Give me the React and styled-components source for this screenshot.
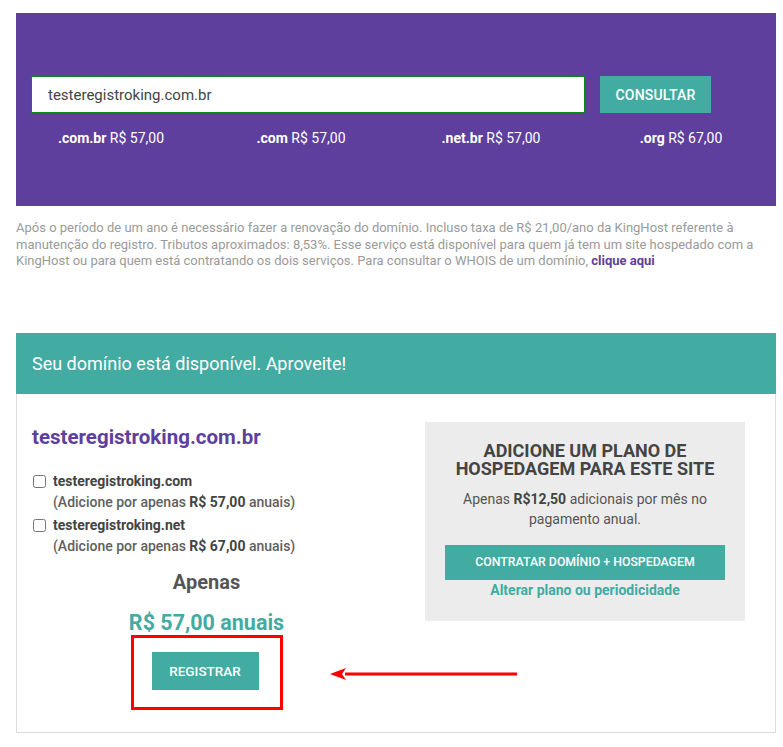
import React from "react";
import styled, { createGlobalStyle } from "styled-components";

const GlobalStyle = createGlobalStyle`
  body {
    margin: 0;
    background: #fff;
    font-family: Roboto, "Liberation Sans", Arial, sans-serif;
  }
`;

const PURPLE = "#5e3f9d";
const TEAL = "#42aba2";

const Page = styled.div`
  width: 760px;
  margin: 13px 0 0 16px;
`;

const SearchBanner = styled.div`
  background-color: ${PURPLE};
  height: 193px;
  padding-top: 63px;
  box-sizing: border-box;
`;

const SearchRow = styled.div`
  display: flex;
  gap: 15px;
  padding-left: 15px;
`;

const DomainInput = styled.input`
  width: 554px;
  height: 37px;
  box-sizing: border-box;
  border: 1px solid #0b8a1c;
  outline: none;
  padding: 0 16px;
  font-family: Roboto, "Liberation Sans", Arial, sans-serif;
  font-size: 15px;
  color: #444;
  background: #fff;
`;

const ConsultButton = styled.button`
  width: 111px;
  height: 37px;
  border: none;
  background-color: ${TEAL};
  color: #fff;
  font-family: Roboto, "Liberation Sans", Arial, sans-serif;
  font-size: 14px;
  font-weight: 500;
  letter-spacing: 0.2px;
  text-transform: uppercase;
`;

const PriceRow = styled.div`
  display: grid;
  grid-template-columns: repeat(4, 1fr);
  margin-top: 15px;
`;

const PriceItem = styled.div`
  text-align: center;
  color: #fff;
  font-size: 14px;
  line-height: 20px;

  b {
    font-weight: 700;
  }
`;

const Notice = styled.p`
  margin: 14px 0 0;
  font-size: 13px;
  line-height: 16.5px;
  color: #9a9a9a;

  a {
    color: ${PURPLE};
    font-weight: 700;
    text-decoration: none;
  }
`;

const ResultCard = styled.div`
  margin-top: 63px;
  position: relative;
`;

const ResultHeader = styled.div`
  background-color: ${TEAL};
  height: 61px;
  display: flex;
  align-items: center;
  padding-left: 16px;
  color: #fff;
  font-size: 18px;
`;

const ResultBody = styled.div`
  display: grid;
  grid-template-columns: 1fr 1fr;
  border: 1px solid #dcdcdc;
  border-top: none;
  height: 339px;
  box-sizing: border-box;
`;

const LeftCol = styled.div`
  padding: 31px 0 0 15px;
  display: flex;
  flex-direction: column;
`;

const DomainTitle = styled.h2`
  margin: 0;
  font-size: 20.5px;
  line-height: 24px;
  font-weight: 700;
  color: ${PURPLE};
`;

const ExtraList = styled.div`
  margin-top: 22px;
  display: flex;
  flex-direction: column;
  gap: 2px;
`;

const ExtraItem = styled.label`
  display: flex;
  align-items: flex-start;
  gap: 7px;
  font-size: 14px;
  line-height: 21px;
  font-weight: 500;
  color: #606060;

  input {
    margin: 4px 0 0 1px;
    width: 13px;
    height: 13px;
  }

  b {
    font-weight: 700;
    color: #444;
  }
`;

const PriceBlock = styled.div`
  display: flex;
  flex-direction: column;
  align-items: center;
  margin-left: -15px;
`;

const ApenasLabel = styled.div`
  margin-top: 13px;
  font-size: 20px;
  line-height: 24px;
  font-weight: 700;
  color: #555;
`;

const TotalPrice = styled.div`
  margin-top: 16px;
  font-size: 21.5px;
  line-height: 26px;
  font-weight: 700;
  color: ${TEAL};
`;

const Highlight = styled.div`
  border: 3px solid #f00;
  padding: 14px 21px 17px 18px;
  margin-top: -1px;
`;

const RegisterButton = styled.button`
  width: 107px;
  height: 38px;
  border: none;
  background-color: ${TEAL};
  color: #fff;
  font-family: Roboto, "Liberation Sans", Arial, sans-serif;
  font-size: 13.5px;
  font-weight: 500;
  text-transform: uppercase;
`;

const RightCol = styled.div`
  padding: 28px 0 0 29px;
`;

const HostingBox = styled.div`
  width: 320px;
  height: 199px;
  background-color: #ececec;
  display: flex;
  flex-direction: column;
  align-items: center;
  padding-top: 20px;
  box-sizing: border-box;
  text-align: center;
`;

const HostingTitle = styled.h3`
  margin: 0;
  font-size: 18px;
  line-height: 18.5px;
  font-weight: 700;
  color: #444;
  text-transform: uppercase;
`;

const HostingText = styled.p`
  margin: 10px 0 0;
  font-size: 14px;
  line-height: 20px;
  color: #555;
  width: 260px;

  b {
    color: #444;
  }
`;

const HostingButton = styled.button`
  margin-top: 16px;
  width: 280px;
  height: 35px;
  border: none;
  background-color: ${TEAL};
  color: #fff;
  font-family: Roboto, "Liberation Sans", Arial, sans-serif;
  font-size: 12.3px;
  font-weight: 500;
  text-transform: uppercase;
`;

const ChangeLink = styled.a`
  margin-top: 2px;
  font-size: 14px;
  line-height: 17px;
  font-weight: 700;
  color: ${TEAL};
  text-decoration: none;
`;

const PointerArrow = styled.svg`
  position: absolute;
  left: 312px;
  top: 333px;
`;

const prices = [
  { tld: ".com.br", price: "R$ 57,00" },
  { tld: ".com", price: "R$ 57,00" },
  { tld: ".net.br", price: "R$ 57,00" },
  { tld: ".org", price: "R$ 67,00" },
];

const extras = [
  { domain: "testeregistroking.com", price: "R$ 57,00" },
  { domain: "testeregistroking.net", price: "R$ 67,00" },
];

export default function App() {
  return (
    <Page>
      <GlobalStyle />
      <SearchBanner>
        <SearchRow>
          <DomainInput defaultValue="testeregistroking.com.br" />
          <ConsultButton>Consultar</ConsultButton>
        </SearchRow>
        <PriceRow>
          {prices.map((p) => (
            <PriceItem key={p.tld}>
              <b>{p.tld}</b> {p.price}
            </PriceItem>
          ))}
        </PriceRow>
      </SearchBanner>

      <Notice>
        Após o período de um ano é necessário fazer a renovação do domínio.
        Incluso taxa de R$ 21,00/ano da KingHost referente à manutenção do
        registro. Tributos aproximados: 8,53%. Esse serviço está disponível
        para quem já tem um site hospedado com a KingHost ou para quem está
        contratando os dois serviços. Para consultar o WHOIS de um domínio,{" "}
        <a href="#">clique aqui</a>
      </Notice>

      <ResultCard>
        <ResultHeader>Seu domínio está disponível. Aproveite!</ResultHeader>
        <ResultBody>
          <LeftCol>
            <DomainTitle>testeregistroking.com.br</DomainTitle>
            <ExtraList>
              {extras.map((e) => (
                <ExtraItem key={e.domain}>
                  <input type="checkbox" />
                  <span>
                    <b>{e.domain}</b>
                    <br />
                    (Adicione por apenas <b>{e.price}</b> anuais)
                  </span>
                </ExtraItem>
              ))}
            </ExtraList>
            <PriceBlock>
              <ApenasLabel>Apenas</ApenasLabel>
              <TotalPrice>R$ 57,00 anuais</TotalPrice>
              <Highlight>
                <RegisterButton>Registrar</RegisterButton>
              </Highlight>
            </PriceBlock>
          </LeftCol>
          <RightCol>
            <HostingBox>
              <HostingTitle>
                Adicione um plano de
                <br />
                hospedagem para este site
              </HostingTitle>
              <HostingText>
                Apenas <b>R$12,50</b> adicionais por mês no pagamento anual.
              </HostingText>
              <HostingButton>Contratar domínio + hospedagem</HostingButton>
              <ChangeLink href="#">Alterar plano ou periodicidade</ChangeLink>
            </HostingBox>
          </RightCol>
        </ResultBody>
        <PointerArrow width="190" height="16" viewBox="0 0 190 16">
          <path d="M17 6.5 H189 V9.5 H17 Z" fill="#f00" />
          <path d="M2 8 L18 2 L14 8 L18 14 Z" fill="#f00" />
        </PointerArrow>
      </ResultCard>
    </Page>
  );
}
